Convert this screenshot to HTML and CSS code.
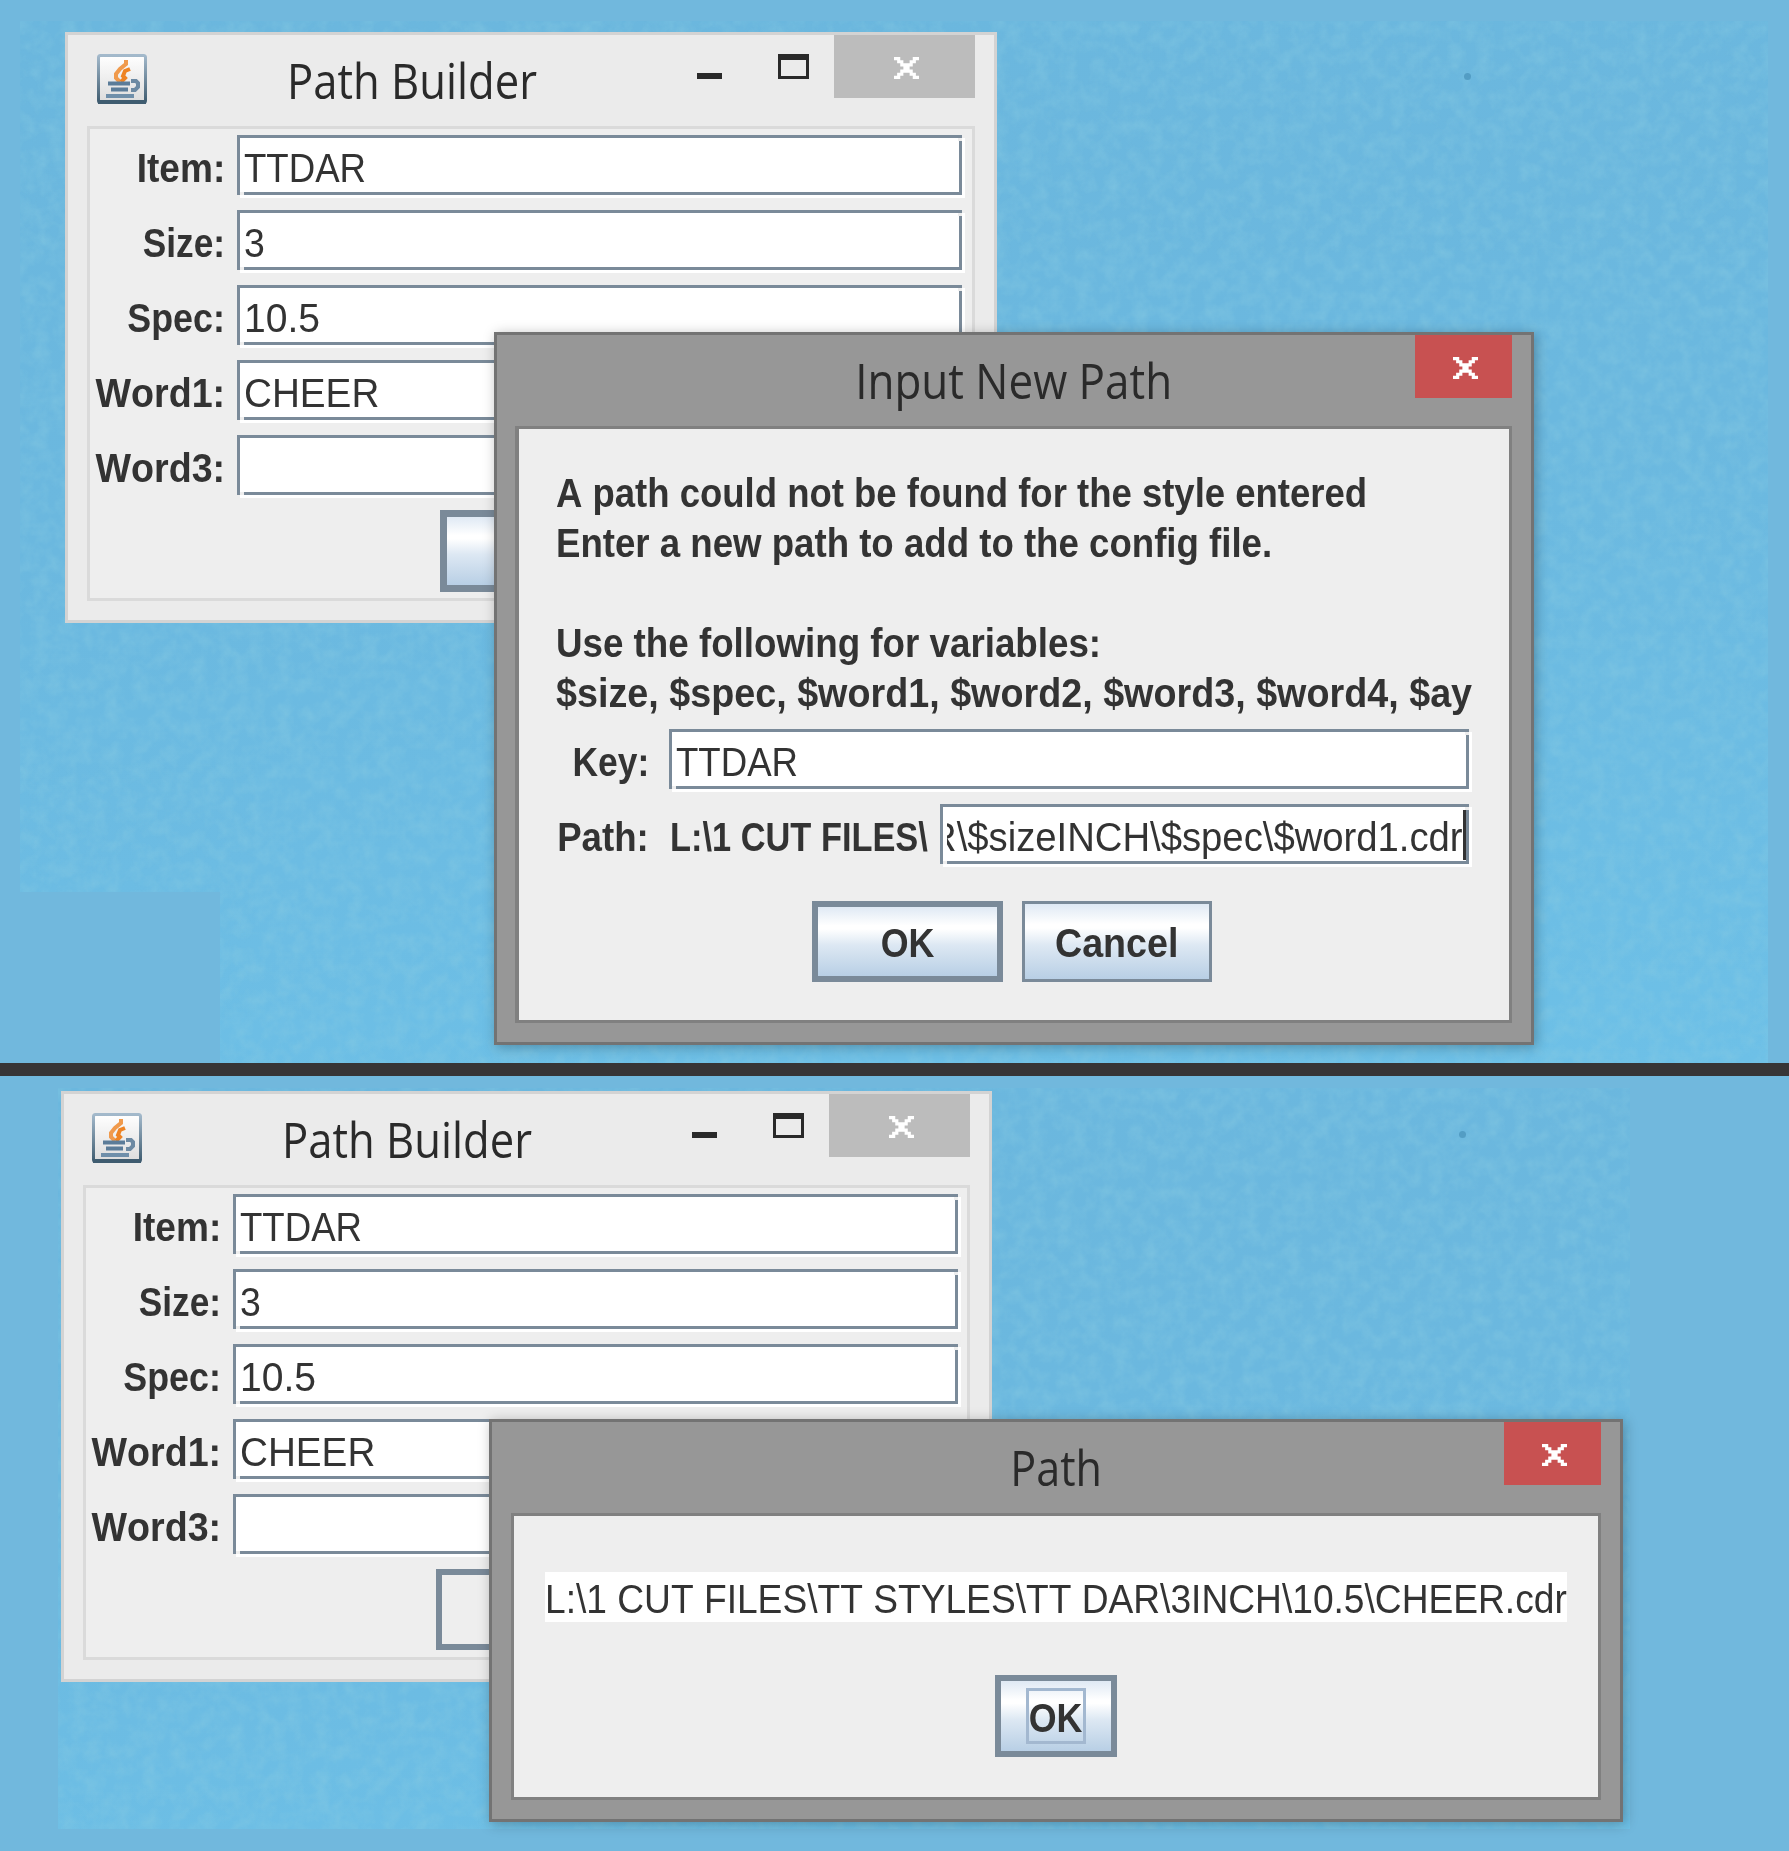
FILE: index.html
```html
<!DOCTYPE html>
<html lang="en">
<head>
<meta charset="utf-8">
<title>Path Builder</title>
<link rel="stylesheet" href="styles.css">
</head>
<body>
<svg class="defs" width="0" height="0" aria-hidden="true">
  <defs>
    <linearGradient id="iconEdge" x1="0" y1="0" x2="0" y2="1"><stop offset="0" stop-color="#a3b9cb"/><stop offset="1" stop-color="#3f5c70"/></linearGradient>
    <linearGradient id="iconFace" x1="0" y1="0" x2="0" y2="1"><stop offset="0" stop-color="#ffffff"/><stop offset="1" stop-color="#dcdcdc"/></linearGradient>
    <filter id="grain" x="0" y="0" width="100%" height="100%">
      <feTurbulence type="fractalNoise" baseFrequency="0.07" numOctaves="3" seed="4"/>
      <feColorMatrix values="0 0 0 0 0.25  0 0 0 0 0.60  0 0 0 0 0.76  1.3 0 0 0 -0.45"/>
    </filter>
    <symbol id="java" viewBox="0 0 50 50">
      <rect x="1.5" y="1.5" width="47" height="47" rx="2" fill="url(#iconFace)" stroke="url(#iconEdge)" stroke-width="3"/>
      <path d="M29 6v4l-6 5-4 5v4l4 4" fill="none" stroke="#f09a4c" stroke-width="4"/>
      <path d="M33 15l-5 2-2 5 2 2-4 4" fill="none" stroke="#ee8424" stroke-width="4"/>
      <path d="M11 29.500h22M14 35.500h17" fill="none" stroke="#5b7c99" stroke-width="4"/>
      <path d="M34 27h5l2 2v4l-3 3h-4" fill="none" stroke="#6d8aa3" stroke-width="4"/>
      <path d="M9 42h28" fill="none" stroke="#6f8faa" stroke-width="4"/>
      <path d="M1 48h48" stroke="#3f5c70" stroke-width="4"/>
    </symbol>
    <symbol id="cross" viewBox="0 0 8 7" preserveAspectRatio="none">
      <path d="M0 0h2v1h1v1h2v-1h1v-1h2v1h-1v1h-1v1h-1v1h1v1h1v1h1v1h-2v-1h-1v-1h-2v1h-1v1h-2v-1h1v-1h1v-1h1v-1h-1v-1h-1v-1h-1z" fill="#fff"/>
    </symbol>
  </defs>
</svg>

<main class="page">
  <section class="scene scene-input">
    <div class="wall wall-input"><svg class="grain"><rect width="100%" height="100%" filter="url(#grain)"/></svg></div>

    <div class="window main-window">
      <header class="titlebar">
        <svg class="app-icon"><use href="#java"/></svg>
        <h1 class="title"><span class="t s89">Path Builder</span></h1>
        <span class="minimize"></span><span class="maximize"></span>
        <span class="close"><svg class="x"><use href="#cross"/></svg></span>
      </header>
      <div class="frame form">
        <label class="label"><span class="t s91">Item:</span></label><div class="field"><span class="t s90">TTDAR</span></div>
        <label class="label"><span class="t s865">Size:</span></label><div class="field"><span class="t s92">3</span></div>
        <label class="label"><span class="t s88">Spec:</span></label><div class="field"><span class="t s96">10.5</span></div>
        <label class="label"><span class="t s925">Word1:</span></label><div class="field"><span class="t s95">CHEER</span></div>
        <label class="label"><span class="t s925">Word3:</span></label><div class="field"></div>
        <div class="button default submit"></div>
      </div>
    </div>

    <div class="window dialog input-dialog">
      <header class="titlebar">
        <h2 class="title"><span class="t s897">Input New Path</span></h2>
        <span class="close"><svg class="x"><use href="#cross"/></svg></span>
      </header>
      <div class="frame">
        <div class="message">
          <p><span class="t s897">A path could not be found for the style entered</span></p>
          <p><span class="t s90">Enter a new path to add to the config file.</span></p>
          <p></p>
          <p><span class="t s903">Use the following for variables:</span></p>
          <p><span class="t s927">$size, $spec, $word1, $word2, $word3, $word4, $ay</span></p>
        </div>
        <div class="path-form">
          <label class="label"><span class="t s87">Key:</span></label>
          <div class="field"><span class="t s90">TTDAR</span></div>
          <label class="label"><span class="t s90">Path:</span></label>
          <div class="path-row">
            <span class="prefix"><span class="t s845">L:\1 CUT FILES\</span></span>
            <div class="field scrolled"><div class="clip"><span class="t s94">R\$sizeINCH\$spec\$word1.cdr</span></div><i class="caret"></i></div>
          </div>
        </div>
        <div class="actions">
          <div class="button default"><span class="t s88">OK</span></div>
          <div class="button cancel"><span class="t s925">Cancel</span></div>
        </div>
      </div>
    </div>
  </section>

  <section class="scene scene-result">
    <div class="wall wall-result"><svg class="grain"><rect width="100%" height="100%" filter="url(#grain)"/></svg></div>

    <div class="window main-window">
      <header class="titlebar">
        <svg class="app-icon"><use href="#java"/></svg>
        <h1 class="title"><span class="t s89">Path Builder</span></h1>
        <span class="minimize"></span><span class="maximize"></span>
        <span class="close"><svg class="x"><use href="#cross"/></svg></span>
      </header>
      <div class="frame form">
        <label class="label"><span class="t s91">Item:</span></label><div class="field"><span class="t s90">TTDAR</span></div>
        <label class="label"><span class="t s865">Size:</span></label><div class="field"><span class="t s92">3</span></div>
        <label class="label"><span class="t s88">Spec:</span></label><div class="field"><span class="t s96">10.5</span></div>
        <label class="label"><span class="t s925">Word1:</span></label><div class="field"><span class="t s95">CHEER</span></div>
        <label class="label"><span class="t s925">Word3:</span></label><div class="field"></div>
        <div class="button default submit pressed"></div>
      </div>
    </div>

    <div class="window dialog result-dialog">
      <header class="titlebar">
        <h2 class="title"><span class="t s88">Path</span></h2>
        <span class="close"><svg class="x"><use href="#cross"/></svg></span>
      </header>
      <div class="frame">
        <div class="output"><span class="t s913">L:\1 CUT FILES\TT STYLES\TT DAR\3INCH\10.5\CHEER.cdr</span></div>
        <div class="button default focused"><span class="focus"><span class="t s88">OK</span></span></div>
      </div>
    </div>
  </section>
</main>
</body>
</html>
```
FILE: styles.css
```css
* { box-sizing: border-box; }

body {
  margin: 0;
  background: #71b8dd;
  color: #333;
  font: 40.7px "Liberation Sans", Arial, sans-serif;
  font-kerning: none;
}

h1, h2, p { margin: 0; font-size: inherit; font-weight: inherit; }
svg { display: block; }
.defs { position: absolute; }

.page { width: 1789px; height: 1851px; overflow: hidden; }
.scene { position: relative; overflow: hidden; background: #71b8dd; }
.scene-input { height: 1076px; border-bottom: 13px solid #373536; }
.scene-result { height: 775px; }

/* Desktop wallpaper */
.wall { position: absolute; background: linear-gradient(175deg, #6bb7de, #6bb8df 45%, #6dc0e7); }
.wall-input {
  left: 20px; top: 21px; width: 1748px; height: 1042px;
  clip-path: polygon(0 0, 100% 0, 100% 100%, 200px 100%, 200px 871px, 0 871px);
}
.wall-result { left: 58px; top: 12px; width: 1572px; height: 741px; }
.wall::after {
  content: ""; position: absolute; left: 1444px; top: 52px;
  width: 7px; height: 7px; border-radius: 50%; background: #539dc4;
}
.wall-result::after { left: 1401px; top: 43px; }
.grain { width: 100%; height: 100%; opacity: .6; }

/* Horizontally condensed text runs */
.t { display: inline-block; white-space: pre; transform-origin: 0 50%; }
.s845 { transform: scaleX(.845); }
.s865 { transform: scaleX(.865); }
.s87 { transform: scaleX(.87); }
.s88 { transform: scaleX(.88); }
.s89 { transform: scaleX(.89); }
.s897 { transform: scaleX(.897); }
.s90 { transform: scaleX(.9); }
.s903 { transform: scaleX(.903); }
.s91 { transform: scaleX(.91); }
.s913 { transform: scaleX(.913); }
.s92 { transform: scaleX(.92); }
.s925 { transform: scaleX(.925); }
.s927 { transform: scaleX(.927); }
.s94 { transform: scaleX(.94); }
.s95 { transform: scaleX(.95); }
.s96 { transform: scaleX(.96); }

/* Windows */
.window {
  position: absolute; display: flex; flex-direction: column;
  padding: 0 19px 19px; border: 3px solid #d3d3d3; background: #ebebeb;
}
.main-window { left: 65px; top: 32px; width: 932px; height: 591px; }
.scene-result .main-window { left: 61px; top: 15px; width: 931px; }
.titlebar { display: flex; align-items: flex-start; flex: none; height: 91px; }
.title {
  flex: 1; margin-top: 15px; color: #2a2a2a;
  font: 49px/60px "Open Sans", "Noto Sans", sans-serif; white-space: nowrap;
}
.main-window .title { margin-left: 140px; }
.app-icon { flex: none; width: 50px; height: 50px; margin: 19px 0 0 10px; }
.scene-result .app-icon { margin-left: 9px; }
.minimize { width: 25px; height: 6px; margin: 38px 56px 0 0; background: #292929; }
.maximize { width: 31px; height: 25px; margin: 19px 25px 0 0; border: 3px solid #292929; border-top-width: 6px; }
.close { display: flex; justify-content: center; width: 141px; height: 63px; padding: 22px 0 0 3px; background: #bcbcbc; }
.x { width: 25px; height: 22px; }
.frame { flex: 1; border: 3px solid #dadada; background: #eee; }

.dialog { border-color: #737373; background: #979797; box-shadow: 2px 2px 12px rgba(0, 0, 0, .28); }
.dialog .frame { border-color: #808080; }
.dialog .title { padding-left: 97px; text-align: center; }
.dialog .title .t { transform-origin: 50% 50%; }
.dialog .close { width: 97px; background: #c85151; }

/* Form controls */
.form {
  display: grid; grid-template-columns: 138px 728px; grid-auto-rows: 63px;
  gap: 12px 9px; padding-top: 6px;
}
.label { display: flex; justify-content: flex-end; padding-right: 1px; font-weight: 700; line-height: 66px; }
.label .t { transform-origin: 100% 50%; }
.field {
  position: relative; height: 60px; margin-right: 3px; padding-left: 4px;
  border: 3px solid #7a8a99; background: #fff; box-shadow: 3px 3px 0 #fff;
  line-height: 60px; white-space: nowrap;
}
.field::before, .field::after { content: ""; position: absolute; width: 4px; height: 3px; background: #eee; }
.field::before { left: 0; bottom: -3px; }
.field::after { right: -3px; top: 0; }
.form .label { padding-right: 3px; }

.button {
  display: flex; justify-content: center; align-items: center;
  width: 191px; height: 81px; padding-top: 3px; border: 3px solid #7a8a99;
  background: linear-gradient(#dfe9f4, #fff 27%, #fff 32%, #dde8f3 55%, #b8cfe5);
  font-weight: 700; line-height: 50px;
}
.button .t { transform-origin: 50% 50%; }
.default { border-width: 6px; }
.cancel { width: 190px; }
.submit { grid-column: 2; margin-left: 203px; height: 82px; border-width: 7px; }
.pressed { height: 81px; background: #eee; border-width: 6px; }

/* New path dialog */
.input-dialog { left: 494px; top: 332px; width: 1040px; height: 713px; padding-left: 18px; }
.input-dialog .frame { padding: 39px 37px 0; border-left-width: 4px; }
.input-dialog .title { padding-left: 98px; }
.message { height: 250px; font-weight: 700; line-height: 50px; }
.message p { height: 50px; white-space: nowrap; }
.path-form {
  display: grid; grid-template-columns: 94px 803px; grid-auto-rows: 63px;
  gap: 12px 19px; margin-top: 11px;
}
.path-row { display: flex; }
.prefix { flex: none; width: 271px; padding-left: 1px; font-weight: 700; line-height: 66px; }
.prefix .t { margin-right: -50px; }
.scrolled { flex: 1; display: flex; justify-content: flex-end; padding: 0; }
.clip { display: flex; justify-content: flex-end; width: 516px; overflow: hidden; }
.clip .t { transform-origin: 100% 50%; }
.caret { width: 3px; height: 50px; margin-top: 3px; background: #333; }
.actions { display: flex; justify-content: center; gap: 19px; margin: 34px 4px 0 0; }

/* Result dialog */
.result-dialog { left: 489px; top: 343px; width: 1134px; height: 403px; }
.result-dialog .frame { display: flex; flex-direction: column; align-items: center; padding-top: 56px; }
.output { width: 1022px; height: 50px; background: #fff; line-height: 54px; white-space: nowrap; overflow: hidden; }
.focused { width: 122px; height: 82px; margin-top: 53px; padding: 0; }
.focus { display: flex; justify-content: center; width: 60px; height: 56px; border: 3px solid #a3b8d0; line-height: 55px; }
```
